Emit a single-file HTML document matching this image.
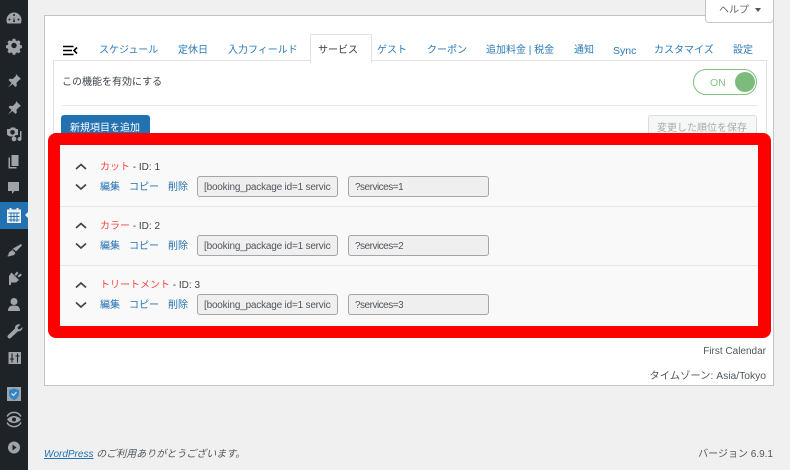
<!DOCTYPE html>
<html lang="ja"><head><meta charset="utf-8">
<style>
html,body{margin:0;padding:0;width:790px;height:470px;overflow:hidden;background:#f0f0f0}
body{position:relative;font-family:"Liberation Sans","Noto Sans CJK JP",sans-serif;font-size:10px;color:#3c434a}
div,span,svg,a{position:absolute;white-space:nowrap}
.t{line-height:14px;height:14px;margin-top:2px}
.l{color:#2271b1;font-size:10px}
.in{height:19px;line-height:19px;background:#efefef;border:1px solid #a3a5a8;border-radius:3px;color:#50575e;font-size:10px;overflow:hidden;box-sizing:content-box}
.in span{left:6px;top:1px;line-height:19px;height:19px;overflow:hidden}
.a{width:127px;letter-spacing:-.2px}
.b{letter-spacing:-.5px}
.sep{left:60px;width:698px;height:1px;background:#e6e6e6}
</style></head><body>
<div style="left:0;top:0;width:28px;height:470px;background:#1d2327"></div>
<div style="left:0;top:202px;width:28px;height:27px;background:#2271b1"></div>
<div style="left:25px;top:211px;border:4px solid transparent;border-right-color:#f0f0f0;border-left:0"></div>

<svg style="left:0;top:0" width="28" height="470" viewBox="0 0 28 470" fill="#a0a3a7">
<path d="M14 12.500a7.500 7.500 0 0 0-7.500 7.500c0 1.200.3 2.400.8 3.500h13.400c.5-1.100.8-2.300.8-3.500A7.500 7.500 0 0 0 14 12.500z"/>
<path d="M14 17l-1 5h2z" fill="#1d2327"/><circle cx="9.500" cy="19.500" r="1" fill="#1d2327"/><circle cx="18.500" cy="19.500" r="1" fill="#1d2327"/><circle cx="14" cy="15" r="1" fill="#1d2327"/>
<path transform="translate(1.400 4.550) scale(.9)" fill-rule="evenodd" d="M12.500 38h3l.4 2 1.500.7 1.800-1.100 2.100 2.100-1.100 1.800.7 1.500 2 .4v3l-2 .4-.7 1.500 1.100 1.800-2.100 2.100-1.800-1.100-1.500.7-.4 2h-3l-.4-2-1.500-.7-1.800 1.100-2.100-2.100 1.100-1.800-.7-1.500-2-.4v-3l2-.4.7-1.500-1.100-1.800 2.100-2.100 1.800 1.100 1.500-.7zM14 42.500a3 3 0 1 0 0 6 3 3 0 0 0 0-6z"/>
<path d="M16 74l5 5-1.500.7-3 3 .3 3-1.300 1.300-3-3-4.500 3.500 3.500-4.500-3-3 1.300-1.300 3 .3 3-3z"/>
<path d="M16 101l5 5-1.500.7-3 3 .3 3-1.300 1.300-3-3-4.500 3.500 3.500-4.500-3-3 1.300-1.300 3 .3 3-3z"/>
<path fill-rule="evenodd" d="M7 129h3l1-1.500h4l1 1.500h2v6h-1a4 4 0 0 0-3 1.500H11a5 5 0 0 1-4-2zM12.500 130a2.300 2.300 0 1 0 0 4.600 2.300 2.300 0 0 0 0-4.600z"/>
<path d="M14 136.500a2.400 2.400 0 1 1 0 4.800 2.400 2.400 0 0 1 0-4.800zM20 131h1.500v8a2 2 0 1 1-1.500-1.900z"/>
<path d="M11.500 155h7v11h-7z"/><path d="M8.500 157.500H10V167h6.500v1.500h-8z"/>
<path d="M8 182h11v9h-4.500l-2.500 3v-3H8z"/>
<path d="M7 209.500h14v13.500H7z" fill="#f0f0f0"/><path d="M9.500 208h2v3h-2zM16.500 208h2v3h-2z" fill="#f0f0f0"/>
<path d="M8.500 213h11M8.500 216.500h11M8.500 220h11M11 213v9M14 213v9M17 213v9" stroke="#2271b1" stroke-width=".9" fill="none"/>
<path d="M21 244l1 1.500-6 6-3-3zM12 249.500l3.500 3.500-1.500 2-5.500 1.500-1.500-.5c1.500-.5 1.500-1 1.500-2s1.500-3.500 6-4.500z"/>
<path d="M20.500 273.500l-3 2.500 1.500 1.500 3-2.500zM17 271.500l-2.500 3 1.500 1.500 2.500-3z"/><path d="M11.500 272.500l7.500 7.500-3 2.500h-5v2.500H9v-9z"/>
<circle cx="14" cy="301.500" r="3.500"/><path d="M8 311c0-4 2-5.500 6-5.500s6 1.500 6 5.500z"/>
<path d="M20.500 324.500l-3 3 .5 1.500 1.500.5 3-2.500c.2 2.500-1.800 4.500-4.500 4.300l-7 6.500a1.500 1.500 0 0 1-3-2.500l7-6.800c-.3-3 2-5 5.500-4z"/>
<path d="M8.500 352h12.500v12H8.500z"/><path d="M12 353.500v9M17.500 353.500v9" stroke="#1d2327" stroke-width="1.100"/><path d="M10 359h4M15.500 356h4" stroke="#1d2327" stroke-width="1.100"/>
<rect x="7" y="387" width="14" height="14"/>
<path d="M14 388.500l5 1.500v4c0 3-2.500 5-5 6-2.500-1-5-3-5-6v-4z" fill="#2e86c8"/><path d="M11.500 393.500l2 2 3-3.500" stroke="#d5dde3" stroke-width="1.300" fill="none"/>
<path d="M7 419.500c2-2.500 4.500-3.500 7-3.500s5 1 7 3.500c-2 2.500-4.500 3.500-7 3.500s-5-1-7-3.500z"/><circle cx="14" cy="419.500" r="2" fill="#1d2327"/>
<path d="M7 416.500a8 8 0 0 1 14 0M21 422.500a8 8 0 0 1-14 0" stroke="#a0a3a7" stroke-width="1.400" fill="none"/>
<circle cx="14" cy="447.500" r="6"/><path d="M12.500 444.500l4 3-4 3z" fill="#1d2327"/>
</svg>

<!-- main box -->
<div style="left:44px;top:15px;width:728px;height:369px;background:#fff;border:1px solid #c3c4c7"></div>
<div style="left:705px;top:0;width:67px;height:22px;background:#fff;border:1px solid #c3c4c7;border-top:0;border-radius:0 0 4px 4px"></div>
<div class="t" style="left:719px;top:3px;color:#646970;margin-top:1px">ヘルプ</div>
<div style="left:755px;top:8px;border:3px solid transparent;border-top:4px solid #50575e;border-bottom:0"></div>

<!-- panel -->
<div style="left:53px;top:60px;width:712px;height:90px;border:1px solid #e2e2e2;border-bottom:0"></div>
<div style="left:310px;top:34px;width:60px;height:28px;background:#fff;border:1px solid #e2e2e2;border-bottom:0"></div>
<svg style="left:62px;top:44px" width="16" height="12" viewBox="0 0 16 12"><path d="M1 2.500h10.500M1 6.500h9M1 10.500h10.500" stroke="#000" stroke-width="1.500" fill="none"/><path d="M15 3.500l-3 3 3 3" stroke="#000" stroke-width="1.600" fill="none"/></svg>
<div class="t l" style="left:99px;top:42px;color:#2a7ab5">スケジュール</div>
<div class="t l" style="left:178px;top:42px;color:#2a7ab5">定休日</div>
<div class="t l" style="left:228px;top:42px;color:#2a7ab5">入力フィールド</div>
<div class="t" style="left:318px;top:42px;color:#32373c">サービス</div>
<div class="t l" style="left:377px;top:42px;color:#2a7ab5">ゲスト</div>
<div class="t l" style="left:427px;top:42px;color:#2a7ab5">クーポン</div>
<div class="t l" style="left:486px;top:42px;color:#2a7ab5">追加料金 | 税金</div>
<div class="t l" style="left:574px;top:42px;color:#2a7ab5">通知</div>
<div class="t l" style="left:613px;top:42px;color:#2a7ab5;font-size:10.500px">Sync</div>
<div class="t l" style="left:654px;top:42px;color:#2a7ab5">カスタマイズ</div>
<div class="t l" style="left:733px;top:42px;color:#2a7ab5">設定</div>

<div class="t" style="left:62px;top:74px">この機能を有効にする</div>
<div style="left:693px;top:69px;width:62px;height:24px;border:1px solid #80c080;border-radius:13px;background:#fff"></div>
<div style="left:735px;top:72px;width:20px;height:20px;border-radius:50%;background:#7cbb7c"></div>
<div class="t" style="left:710px;top:74px;color:#86c586;font-size:10.500px">ON</div>
<div style="left:62px;top:105px;width:695px;height:1px;background:#e8e8e8"></div>
<div style="left:61px;top:115px;width:89px;height:26px;background:#2271b1;border-radius:3px"></div>
<div class="t" style="left:70px;top:120px;color:#fff">新規項目を追加</div>
<div style="left:648px;top:115px;width:107px;height:26px;background:#f6f7f7;border:1px solid #dcdcde;border-radius:3px"></div>
<div class="t" style="left:657px;top:120px;color:#a7aaad">変更した順位を保存</div>

<!-- red box -->
<div style="left:48px;top:133px;width:723px;height:205px;background:#f00;border-radius:8px"></div>
<div style="left:60px;top:145px;width:698px;height:181px;background:#f9f9f9"></div>
<div class="sep" style="top:206px"></div>
<div class="sep" style="top:265px"></div>

<svg style="left:74px;top:160px" width="14" height="252" viewBox="0 0 14 252" fill="none" stroke="#3c434a" stroke-width="1.700">
<path d="M2 9l5-4.500 5 4.500M2 24.500l5 4.500 5-4.500"/>
<path d="M2 68l5-4.500 5 4.500M2 83.500l5 4.500 5-4.500"/>
<path d="M2 127.500l5-4.500 5 4.500M2 142.500l5 4.500 5-4.500"/>
</svg>

<div class="t" style="left:100px;top:159px"><span style="position:static;color:#f44">カット</span> - ID: 1</div>
<div class="t l" style="left:100px;top:179px">編集</div><div class="t l" style="left:129px;top:179px">コピー</div><div class="t l" style="left:168px;top:179px">削除</div>
<div class="in" style="left:197px;top:176px;width:139px"><span class="a">[booking_package id=1 services</span></div>
<div class="in" style="left:348px;top:176px;width:139px"><span class="b">?services=1</span></div>

<div class="t" style="left:100px;top:218px"><span style="position:static;color:#f44">カラー</span> - ID: 2</div>
<div class="t l" style="left:100px;top:238px">編集</div><div class="t l" style="left:129px;top:238px">コピー</div><div class="t l" style="left:168px;top:238px">削除</div>
<div class="in" style="left:197px;top:235px;width:139px"><span class="a">[booking_package id=1 services</span></div>
<div class="in" style="left:348px;top:235px;width:139px"><span class="b">?services=2</span></div>

<div class="t" style="left:100px;top:277px"><span style="position:static;color:#f44">トリートメント</span> - ID: 3</div>
<div class="t l" style="left:100px;top:297px">編集</div><div class="t l" style="left:129px;top:297px">コピー</div><div class="t l" style="left:168px;top:297px">削除</div>
<div class="in" style="left:197px;top:294px;width:139px"><span class="a">[booking_package id=1 services</span></div>
<div class="in" style="left:348px;top:294px;width:139px"><span class="b">?services=3</span></div>

<div class="t" style="right:24px;top:343px;color:#50575e">First Calendar</div>
<div class="t" style="right:24px;top:368px;color:#50575e;font-size:10.300px">タイムゾーン: Asia/Tokyo</div>
<div class="t" style="left:44px;top:446px;font-style:italic;color:#50575e"><span style="position:static;color:#2271b1;text-decoration:underline">WordPress</span> のご利用ありがとうございます。</div>
<div class="t" style="right:17px;top:446px;color:#50575e">バージョン 6.9.1</div>
</body></html>
